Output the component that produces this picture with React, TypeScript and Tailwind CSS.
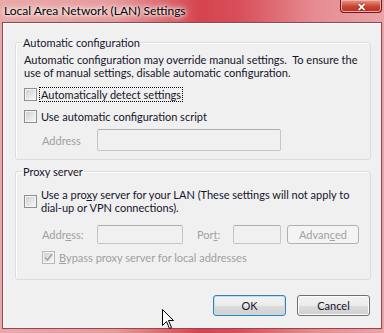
function Check({ disabled, checked }: { disabled?: boolean; checked?: boolean }) {
  return (
    <div
      className={`flex h-[13px] w-[13px] shrink-0 items-center justify-center border ${
        disabled ? "border-[#b8b8b8] bg-[#f4f4f4]" : "border-[#8e8f8f] bg-[#f4f4f4]"
      }`}
    >
      <div className="flex h-[9px] w-[9px] items-center justify-center bg-[linear-gradient(135deg,#cfd1d4,#f7f7f7)]">
        {checked && (
          <svg width="9" height="9" viewBox="0 0 9 9">
            <path d="M1 4.5 L3.5 7 L8 1" fill="none" stroke="#a4a4a4" strokeWidth="1.6" />
          </svg>
        )}
      </div>
    </div>
  );
}

function Field({ w, h }: { w: string; h: string }) {
  return <div className={`${w} ${h} shrink-0 rounded-[2px] border border-[#c3c6c9] border-t-[#abadb3] bg-[#f0f0f0]`} />;
}

export default function App() {
  return (
    <div className="relative flex h-[333px] w-[384px] flex-col overflow-hidden bg-[linear-gradient(90deg,#eaa9a9_0%,#e69a9c_30%,#d5444f_52%,#d84e59_62%,#e68c92_82%,#eaa3a6_100%)] font-['Lato',sans-serif] text-[11px] leading-[13px] text-[#14142a]">
      <div className="flex h-[22px] shrink-0 items-start justify-between pl-[4px] pr-[2px]">
        <div className="pt-[4px] text-[12px] leading-[14px] text-black [text-shadow:0_0_8px_#fff,0_0_5px_#fff,0_0_3px_#fff]">
          Local Area Network (LAN) Settings
        </div>
        <div className="flex h-[13px] w-[42px] items-center justify-center rounded-b-[4px] border border-t-0 border-[#6a1c1c] bg-[linear-gradient(180deg,#ec9a8c,#c94330_55%,#b8321f)] shadow-[inset_0_0_0_1px_#f0b0a8]">
          <span className="text-[11px] font-bold leading-[11px] text-white [text-shadow:0_0_2px_#5a0f0f]">✕</span>
        </div>
      </div>

      <div className="flex min-h-0 flex-1 px-[2px] pb-[4px]">
        <div className="relative flex min-w-0 flex-1 flex-col border border-[#8e4a50] bg-[#f0f0f0] shadow-[inset_1px_1px_0_#fff]">
          <fieldset className="ml-[12px] mt-[13px] w-[356px] min-w-0 rounded-[3px] border border-[#d5dfe5] pb-[8px] pl-[8px] shadow-[inset_1px_1px_0_#fff]">
            <legend className="-ml-[2px] px-[1px]">Automatic configuration</legend>
            <div className="mt-[4px] whitespace-nowrap">
              Automatic configuration may override manual settings.&nbsp; To ensure the
              <br />
              use of manual settings, disable automatic configuration.
            </div>
            <div className="mt-[8px] flex h-[15px] items-center">
              <Check />
              <span className="ml-[2px] border border-dotted border-black px-[1px] leading-[13px]">
                Automatically detect settings
              </span>
            </div>
            <div className="mt-[7px] flex h-[15px] items-center">
              <Check />
              <span className="ml-[4px]">Use automatic configuration script</span>
            </div>
            <div className="mt-[5px] flex items-center pl-[18px]">
              <span className="w-[55px] shrink-0 text-[#a0a0a0]">Address</span>
              <Field w="w-[184px]" h="h-[22px]" />
            </div>
          </fieldset>

          <fieldset className="ml-[12px] mt-[5px] w-[356px] min-w-0 rounded-[3px] border border-[#d5dfe5] pb-[14px] pl-[8px] shadow-[inset_1px_1px_0_#fff]">
            <legend className="-ml-[2px] px-[1px]">Proxy server</legend>
            <div className="mt-[10px] flex items-center">
              <Check />
              <span className="ml-[4px] whitespace-nowrap">
                Use a pro<span className="underline">x</span>y server for your LAN (These settings will not apply to
                <br />
                dial-up or VPN connections).
              </span>
            </div>
            <div className="mt-[11px] flex items-center pl-[18px]">
              <span className="w-[55px] shrink-0 text-[#a0a0a0]">
                Addr<span className="underline">e</span>ss:
              </span>
              <Field w="w-[86px]" h="h-[19px]" />
              <span className="ml-[14px] w-[36px] shrink-0 text-[#a0a0a0]">
                Por<span className="underline">t</span>:
              </span>
              <Field w="w-[48px]" h="h-[19px]" />
              <div className="ml-[6px] flex h-[19px] w-[72px] shrink-0 items-center justify-center rounded-[3px] border border-[#adb2b5] bg-[#f4f4f4] text-[#a0a0a0]">
                Advan<span className="underline">c</span>ed
              </div>
            </div>
            <div className="mt-[6px] flex h-[15px] items-center pl-[18px]">
              <Check disabled checked />
              <span className="ml-[4px] text-[#a0a0a0]">
                <span className="underline">B</span>ypass proxy server for local addresses
              </span>
            </div>
          </fieldset>

          <div className="mt-[15px] flex justify-end gap-[11px] pr-[11px]">
            <div className="flex h-[21px] w-[73px] items-center justify-center rounded-[3px] border border-[#3c7fb1] bg-[linear-gradient(180deg,#f2f2f2_0%,#ebebeb_50%,#dddddd_51%,#cfcfcf_100%)] shadow-[inset_0_0_0_1px_#b5e0f7]">
              OK
            </div>
            <div className="flex h-[21px] w-[73px] items-center justify-center rounded-[3px] border border-[#707070] bg-[linear-gradient(180deg,#f2f2f2_0%,#ebebeb_50%,#dddddd_51%,#cfcfcf_100%)] shadow-[inset_0_0_0_1px_#fcfcfc]">
              Cancel
            </div>
          </div>

          <svg className="absolute left-[159px] top-[286px]" width="13" height="21" viewBox="0 0 13 21">
            <path
              d="M0.5 0.5 L0.5 16.5 L4.5 12.5 L7.5 19.5 L9.5 18.5 L6.5 11.5 L11.5 11.5 Z"
              fill="#fff"
              stroke="#000"
              strokeWidth="1"
            />
          </svg>
        </div>
      </div>
    </div>
  );
}
